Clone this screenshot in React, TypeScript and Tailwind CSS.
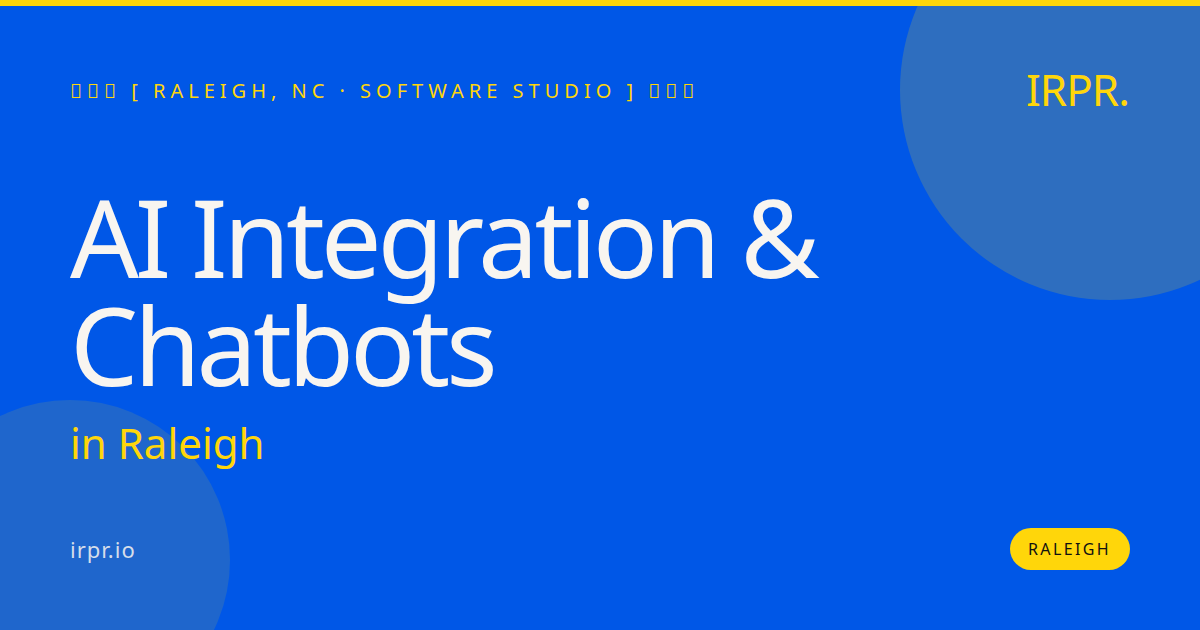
const FONT = { fontFamily: '"Noto Sans", sans-serif' };

export default function App() {
  return (
    <div
      style={FONT}
      className="relative flex h-[630px] w-[1200px] flex-col overflow-hidden bg-[#0057e7] px-[70px] font-['Noto_Sans',sans-serif]"
    >
      <div className="absolute right-[-120px] top-[-120px] h-[420px] w-[420px] rounded-full bg-[#ffd60a]/18" />
      <div className="absolute bottom-[-90px] left-[-90px] h-[320px] w-[320px] rounded-full bg-[#ffd60a]/12" />
      <div className="absolute left-0 right-0 top-0 h-[6px] bg-[#ffd60a]" />

      <div className="relative flex items-start justify-between pt-[64px]">
        <div className="mt-[7px] text-[20px] leading-[40px] tracking-[5px] text-[#ffd60a]">
          {"\uE000\uE001\uE002 [ RALEIGH, NC · SOFTWARE STUDIO ] \uE003\uE004\uE005"}
        </div>
        <div className="mr-px mt-[-3px] text-[44px] leading-[56px] tracking-[-1px] text-[#ffd60a]">IRPR.</div>
      </div>

      <div className="relative mt-[66px] text-[108px] leading-[108px] tracking-[-4.2px] text-[#f8f5f0]">
        <div>AI Integration &amp;</div>
        <div>Chatbots</div>
      </div>
      <div className="relative mt-[16px] text-[42px] leading-[56px] text-[#ffd60a]">in Raleigh</div>

      <div className="relative mt-auto flex items-center justify-between pb-[60px]">
        <div className="text-[22px] tracking-[1px] text-[#f8f5f0]/85">irpr.io</div>
        <div className="flex h-[42px] w-[120px] items-center justify-center rounded-full bg-[#ffd60a] pr-px text-[16px] tracking-[2.4px] text-[#111111]">
          RALEIGH
        </div>
      </div>
    </div>
  );
}
